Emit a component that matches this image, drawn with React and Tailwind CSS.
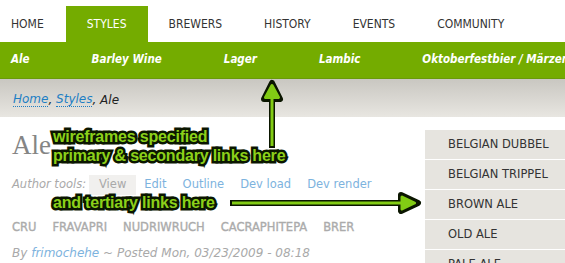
import React from 'react';

const tabs = ['HOME', 'STYLES', 'BREWERS', 'HISTORY', 'EVENTS', 'COMMUNITY'];
const subLinks = ['Ale', 'Barley Wine', 'Lager', 'Lambic', 'Oktoberfestbier / Märzen'];
const sideLinks = ['BELGIAN DUBBEL', 'BELGIAN TRIPPEL', 'BROWN ALE', 'OLD ALE', 'PALE ALE'];
const tags = ['CRU', 'FRAVAPRI', 'NUDRIWRUCH', 'CACRAPHITEPA', 'BRER'];

// outlined marker-style annotation text
const noteStyle = 'font-["Liberation_Sans"] font-bold text-[#8bd11a] tracking-[-0.2px] leading-[19px] text-[16px] whitespace-nowrap [paint-order:stroke_fill] [-webkit-text-stroke:5px_#0b1600]';

export default function App() {
    return (
        <div className='relative w-[565px] h-[263px] overflow-hidden bg-white font-["DejaVu_Sans"]'>
            {/* Primary tabs */}
            <div className='flex h-[42px] items-end font-["DejaVu_Sans_Condensed"]'>
                {tabs.map((t, i) => (
                    <div
                        key={t}
                        className={`h-[36px] flex items-center text-[12px] ${i === 0 ? 'pl-[11px] pr-[22px]' : 'px-[21px]'} ${t === 'STYLES' ? 'bg-[#74ac00] text-white' : 'text-[#333]'}`}
                    >
                        {t}
                    </div>
                ))}
            </div>

            {/* Secondary links */}
            <div className='h-[37px] bg-[#74ac00] flex items-center pl-[11px] gap-[62px] whitespace-nowrap border-b border-[#6a9a0a] font-["DejaVu_Sans_Condensed"]'>
                {subLinks.map(s => (
                    <span key={s} className="text-white italic font-bold text-[11.5px]">{s}</span>
                ))}
            </div>

            {/* Breadcrumb */}
            <div className="h-[38px] bg-gradient-to-b from-[#c9c7c1] to-[#e8e6e1] flex items-center pl-[13px] pt-[3px] text-[12px] italic">
                <span className="text-[#1f7fc4] border-b border-dotted border-[#1f7fc4] leading-[14px]">Home</span>
                <span className="text-[#222]">,&nbsp;</span>
                <span className="text-[#1f7fc4] border-b border-dotted border-[#1f7fc4] leading-[14px]">Styles</span>
                <span className="text-[#222]">, Ale</span>
            </div>

            {/* Content */}
            <div className="flex">
                <div className="flex-1 pl-[12px]">
                    <div className='pt-[12px] h-[58px] font-["Liberation_Serif"] text-[27px] text-[#858585] leading-[32px]'>Ale</div>
                    <div className="flex items-center text-[11.5px] h-[20px]">
                        <span className="italic text-[#a9a9a9] w-[77px]">Author tools:</span>
                        <span className="bg-[#f1f0ee] text-[#a9a9a9] px-[10px] h-[20px] flex items-center">View</span>
                        <span className="text-[#7db3de] ml-[8px]">Edit</span>
                        <span className="text-[#7db3de] ml-[16px]">Outline</span>
                        <span className="text-[#7db3de] ml-[16px]">Dev load</span>
                        <span className="text-[#7db3de] ml-[16px]">Dev render</span>
                    </div>
                    <div className="flex gap-[16px] mt-[24px] text-[11.5px] text-[#ababab] [-webkit-text-stroke:0.35px_#ababab]">
                        {tags.map(t => <span key={t}>{t}</span>)}
                    </div>
                    <div className="mt-[8px] text-[12px] italic text-[#a9a9a9]">
                        By <span className="text-[#7db3de]">frimochehe</span> ~ Posted Mon, 03/23/2009 - 08:18
                    </div>
                </div>

                <div className="w-[140px] mt-[13px] flex flex-col gap-[1px]">
                    {sideLinks.map(s => (
                        <div key={s} className="h-[29px] bg-[#e6e4df] flex items-center pl-[23px] text-[11.5px] text-[#333]">{s}</div>
                    ))}
                </div>
            </div>

            {/* Annotation overlay */}
            <div className="absolute left-[53px] top-[127px]">
                <div className={noteStyle}>wireframes specified</div>
                <div className={noteStyle}>primary &amp; secondary links here</div>
            </div>
            <div className={`absolute left-[53px] top-[193px] ${noteStyle}`}>and tertiary links here</div>

            <svg className="absolute left-0 top-0" width="565" height="263" viewBox="0 0 565 263">
                {/* up arrow */}
                <path d="M272 148 L272 97 M264 99 L272 83 L280 99 Z" stroke="#0b1600" strokeWidth="6" strokeLinejoin="round" fill="#0b1600" />
                <path d="M272 146 L272 97 M265.5 97.5 L272 85.5 L278.5 97.5 Z" stroke="#82cc14" strokeWidth="3" strokeLinejoin="round" fill="#82cc14" />
                {/* right arrow */}
                <path d="M230 203 L402 203 M401 195 L418 203 L401 211 Z" stroke="#0b1600" strokeWidth="6" strokeLinejoin="round" fill="#0b1600" />
                <path d="M232 203 L402 203 M402 197 L414.5 203 L402 209 Z" stroke="#82cc14" strokeWidth="3" strokeLinejoin="round" fill="#82cc14" />
            </svg>
        </div>
    );
}
